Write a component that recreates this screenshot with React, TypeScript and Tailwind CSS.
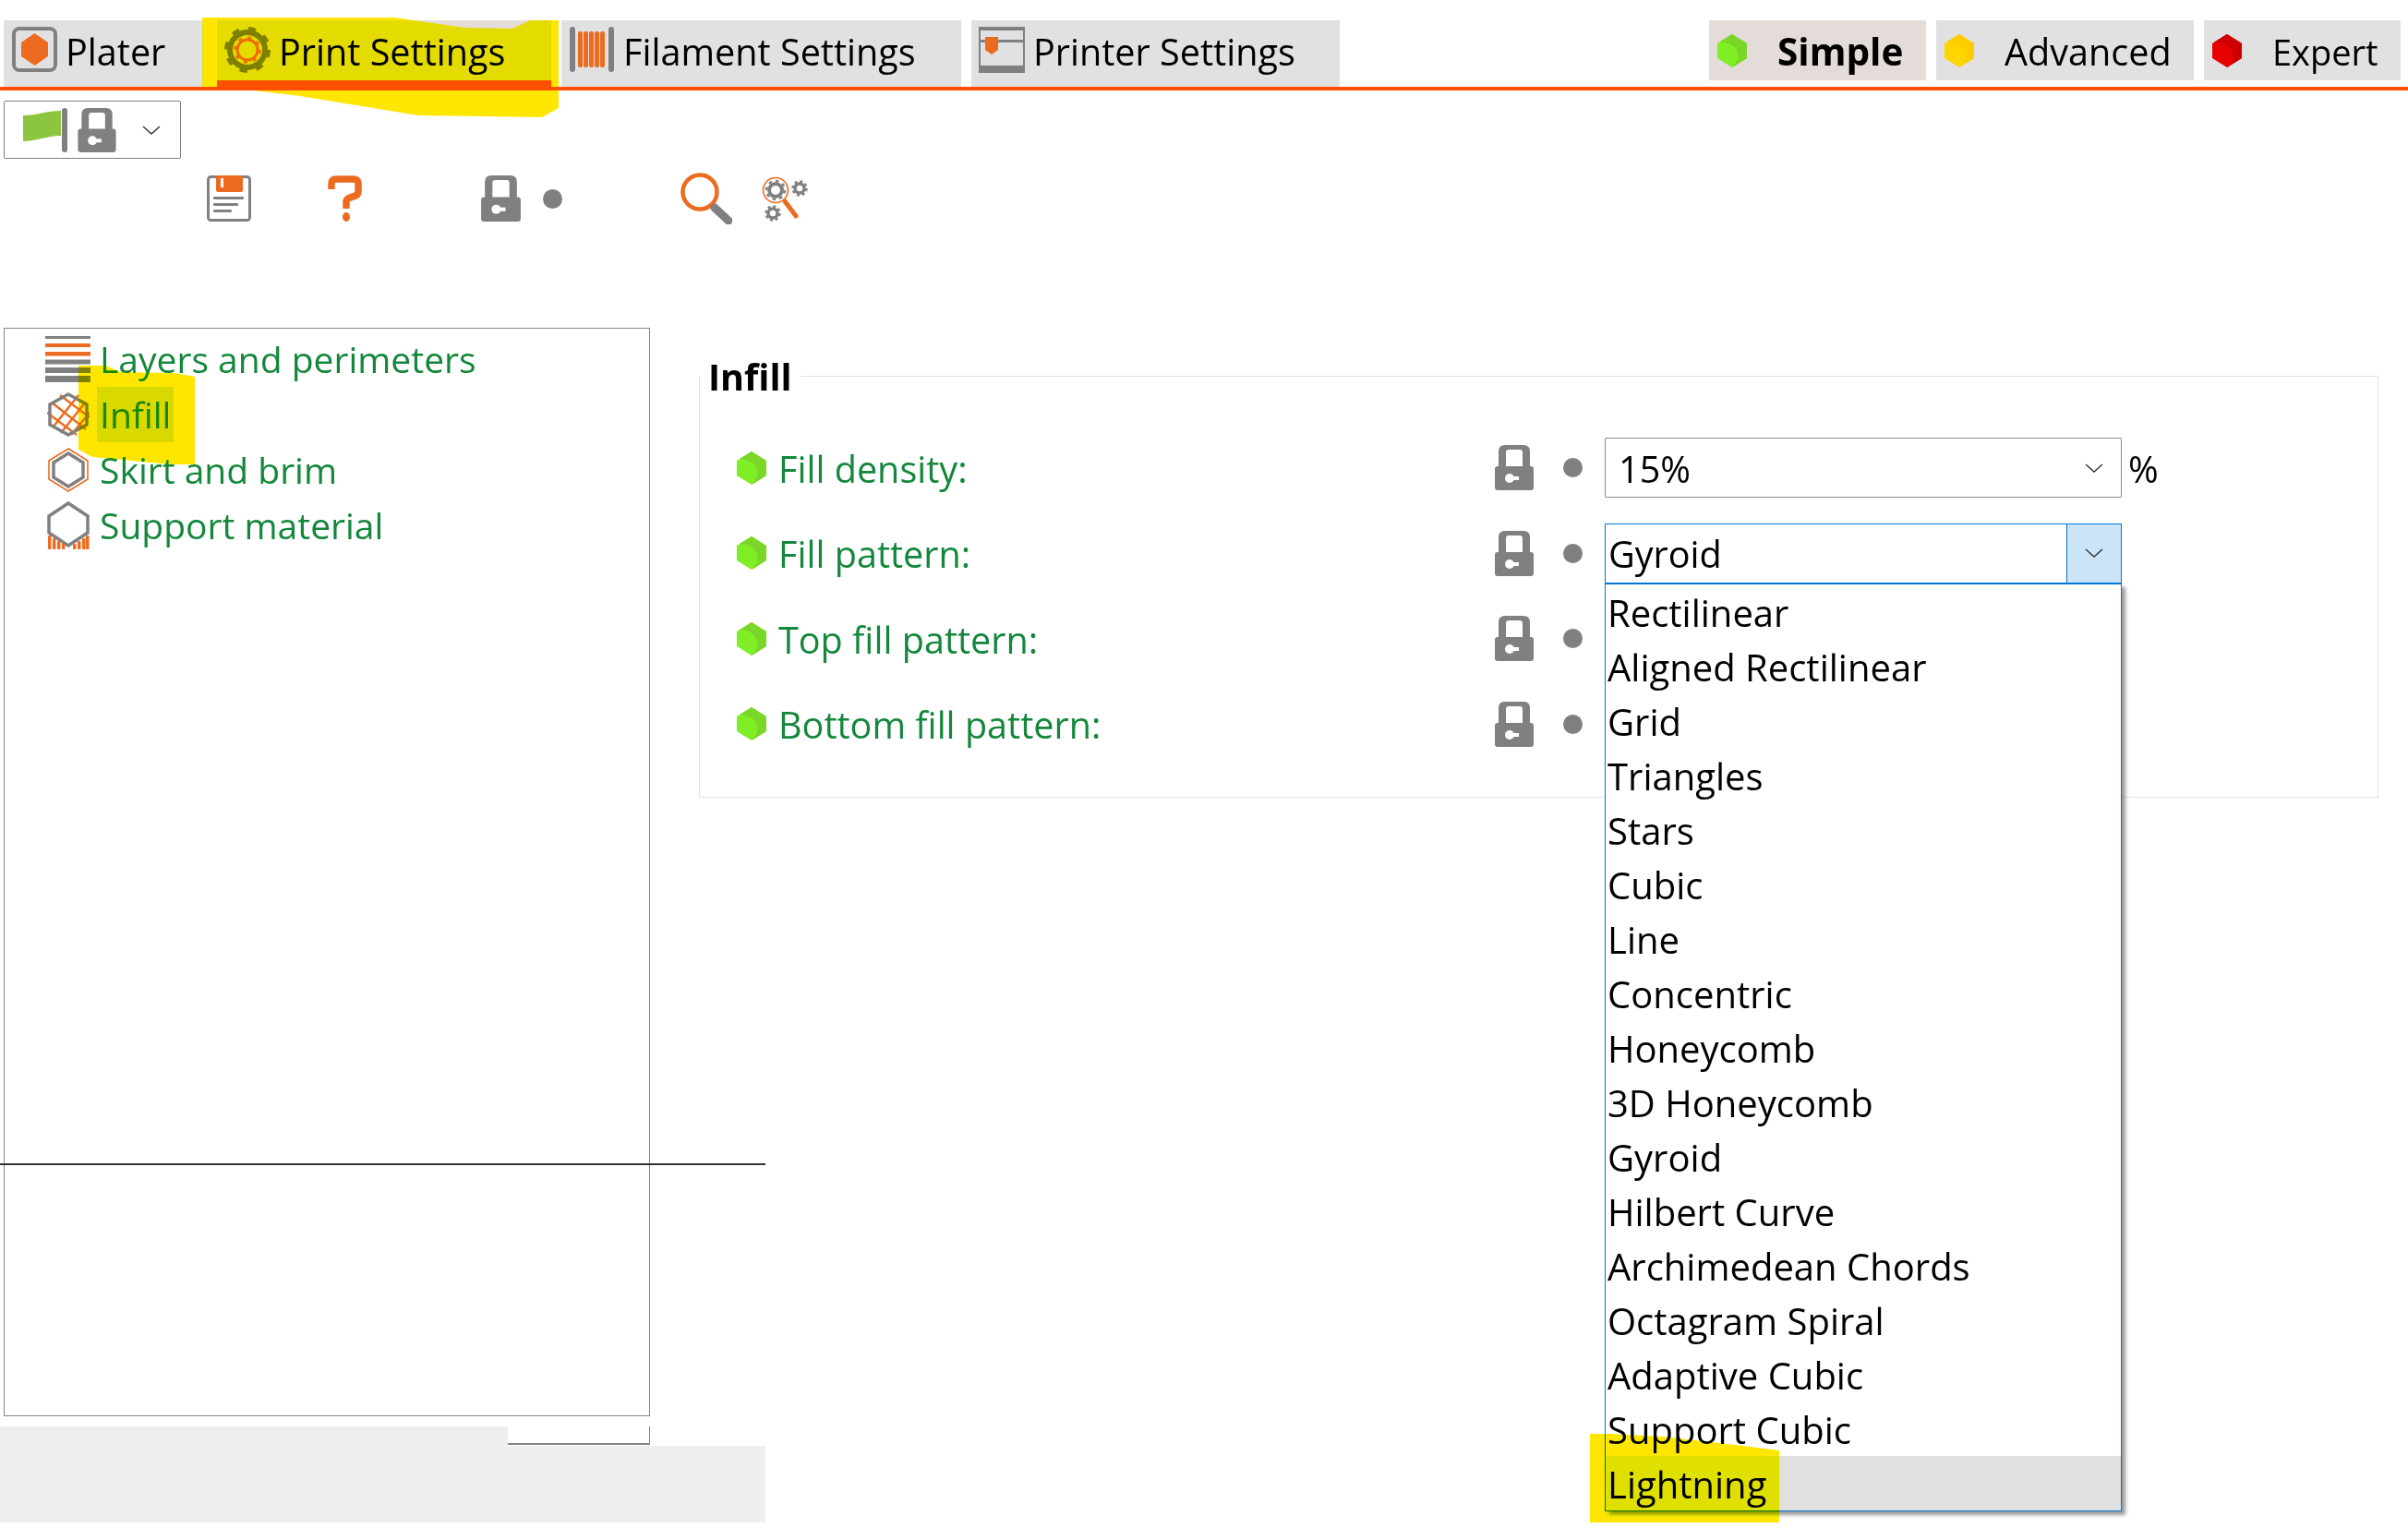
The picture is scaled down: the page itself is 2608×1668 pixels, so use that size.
import { ReactNode } from "react";

const GREY = "#808080";
const ORANGE = "#ed6b21";
const FONT = "font-['Open_Sans',sans-serif]";

// Small drawn icons
function Hex({ color, shade, className }: { color: string; shade: string; className: string }) {
  return (
    <svg viewBox="0 0 32 36" className={className}>
      <polygon points="16,0 32,10 32,26 16,36 0,26 0,10" fill={color} />
      <path d="M16 0 L32 10 L32 26 L16 36 L22 28 C24 18 20 10 3 8 Z" fill={shade} />
    </svg>
  );
}

function Lock({ className }: { className: string }) {
  return (
    <svg viewBox="0 0 42 49" className={className}>
      <path
        fillRule="evenodd"
        d="M4 25 V7 Q4 0 11 0 H31 Q38 0 38 7 V25 H30 V8 Q30 5 27 5 H15 Q12 5 12 8 V25 Z"
        fill={GREY}
      />
      <rect x="0" y="23" width="42" height="26" rx="3" fill={GREY} />
      <circle cx="16" cy="36" r="5" fill="#fff" />
      <rect x="18" y="34" width="8" height="4" fill="#fff" />
    </svg>
  );
}

function Chevron() {
  return (
    <svg viewBox="0 0 20 10" className="h-[10px] w-[20px]">
      <path d="M1 1 L10 9 L19 1" fill="none" stroke="#333" strokeWidth="1.4" />
    </svg>
  );
}

function PlaterIcon() {
  return (
    <svg viewBox="0 0 49 49" className="h-[49px] w-[49px] shrink-0">
      <rect x="2" y="2" width="45" height="45" rx="6" fill="none" stroke={GREY} strokeWidth="4" />
      <polygon points="24.5,7 39,17 39,32 24.5,42 10,32 10,17" fill={ORANGE} />
    </svg>
  );
}

function GearIcon() {
  return (
    <svg viewBox="0 0 50 50" className="h-[50px] w-[50px] shrink-0">
      <circle cx="25" cy="25" r="19" fill="none" stroke={GREY} strokeWidth="6" />
      <circle cx="25" cy="25" r="22.5" fill="none" stroke={GREY} strokeWidth="5" strokeDasharray="8 9.7" />
      <circle cx="25" cy="25" r="11" fill="none" stroke={ORANGE} strokeWidth="3" />
      <circle cx="25" cy="25" r="13.5" fill="none" stroke={ORANGE} strokeWidth="2.5" strokeDasharray="4 6.6" />
    </svg>
  );
}

function FilamentIcon() {
  return (
    <svg viewBox="0 0 48 49" className="h-[49px] w-[48px] shrink-0">
      <rect x="0" y="0" width="6" height="49" rx="3" fill={GREY} />
      <rect x="42" y="0" width="6" height="49" rx="3" fill={GREY} />
      {[9, 15, 21, 27, 33].map((x) => (
        <rect key={x} x={x} y="5" width="5" height="39" rx="2" fill={ORANGE} />
      ))}
    </svg>
  );
}

function PrinterIcon() {
  return (
    <svg viewBox="0 0 50 50" className="h-[50px] w-[50px] shrink-0">
      <rect x="1" y="1" width="48" height="48" fill="none" stroke={GREY} strokeWidth="2" />
      <rect x="0" y="0" width="50" height="4" fill={GREY} />
      <rect x="0" y="14" width="50" height="3" fill={GREY} />
      <rect x="0" y="42" width="50" height="8" fill={GREY} />
      <path d="M7 11 H21 V25 L14 30 L7 25 Z" fill={ORANGE} />
    </svg>
  );
}

function LayersIcon() {
  return (
    <svg viewBox="0 0 49 50" className="h-[50px] w-[49px] shrink-0">
      <rect y="0" width="49" height="3" fill={GREY} />
      <rect y="8" width="49" height="4" fill={ORANGE} />
      <rect y="17" width="49" height="4.5" fill={ORANGE} />
      <rect y="25.5" width="49" height="5" fill={GREY} />
      <rect y="34" width="49" height="6" fill={GREY} />
      <rect y="43" width="49" height="7" fill={GREY} />
    </svg>
  );
}

function InfillIcon() {
  return (
    <svg viewBox="0 0 46 48" className="h-[48px] w-[46px] shrink-0">
      <g stroke={ORANGE} strokeWidth="2.5">
        <path d="M0 22 L32 46 M5 11 L42 40 M14 3 L46 27" />
        <path d="M6 38 L34 3 M15 44 L42 10 M26 46 L46 22" />
      </g>
      <polygon points="23,2 43,13 43,35 23,46 3,35 3,13" fill="none" stroke={GREY} strokeWidth="3.5" />
    </svg>
  );
}

function SkirtIcon() {
  return (
    <svg viewBox="0 0 44 48" className="h-[48px] w-[44px] shrink-0">
      <polygon points="22,1 43,14 43,34 22,47 1,34 1,14" fill="none" stroke={ORANGE} strokeWidth="1.6" />
      <polygon points="22,6 38,16 38,32 22,42 6,32 6,16" fill="none" stroke={GREY} strokeWidth="3.5" />
    </svg>
  );
}

function SupportIcon() {
  return (
    <svg viewBox="0 0 46 52" className="h-[52px] w-[46px] shrink-0">
      <polygon points="23,2 44,16 44,34 23,48 2,34 2,16" fill="none" stroke={GREY} strokeWidth="3.5" />
      {[1, 6, 11, 16].map((x, i) => (
        <rect key={x} x={x} y={37 + i * 3} width="3.5" height={15 - i * 3} rx="1" fill={ORANGE} />
      ))}
      {[28, 33, 38, 42].map((x, i) => (
        <rect key={x} x={x} y={46 - i * 3} width="3.5" height={6 + i * 3} rx="1" fill={ORANGE} />
      ))}
    </svg>
  );
}

function SaveIcon() {
  return (
    <svg viewBox="0 0 48 50" className="h-[50px] w-[48px]">
      <rect x="1.5" y="1.5" width="45" height="47" rx="3" fill="#fff" stroke={GREY} strokeWidth="3" />
      <rect x="10" y="0" width="29" height="18" rx="2" fill={ORANGE} />
      <rect x="15" y="3" width="3" height="10" fill="#fff" />
      <rect x="7" y="23" width="33" height="3" rx="1" fill={GREY} />
      <rect x="7" y="30" width="27" height="3" rx="1" fill={GREY} />
      <rect x="7" y="37" width="20" height="3" rx="1" fill={GREY} />
    </svg>
  );
}

function HelpIcon() {
  return (
    <svg viewBox="0 0 37 50" className="h-[50px] w-[37px]">
      <path d="M4 15 V9 Q4 4 9 4 H27 Q33 4 33 9 V17 Q33 22 27 23 L22 25 Q20 26 20 29 V36" fill="none" stroke={ORANGE} strokeWidth="7.5" />
      <ellipse cx="20" cy="45" rx="4" ry="5" fill={ORANGE} />
    </svg>
  );
}

function SearchIcon() {
  return (
    <svg viewBox="0 0 57 56" className="h-[56px] w-[57px]">
      <circle cx="22" cy="21" r="18.5" fill="none" stroke={ORANGE} strokeWidth="4.5" />
      <path d="M35 36 L40 35" stroke={GREY} strokeWidth="3" />
      <path d="M38 38 L53 52" stroke={GREY} strokeWidth="9" strokeLinecap="round" />
    </svg>
  );
}

function ConfigIcon() {
  return (
    <svg viewBox="0 0 50 50" className="h-[50px] w-[50px]">
      <circle cx="15" cy="16" r="13.5" fill="none" stroke={ORANGE} strokeWidth="1.6" />
      <circle cx="15" cy="16" r="7" fill="none" stroke={GREY} strokeWidth="4" />
      <circle cx="15" cy="16" r="10" fill="none" stroke={GREY} strokeWidth="2.5" strokeDasharray="3.5 4.3" />
      <circle cx="41" cy="14" r="5" fill="none" stroke={GREY} strokeWidth="3.5" />
      <circle cx="41" cy="14" r="7.5" fill="none" stroke={GREY} strokeWidth="2.5" strokeDasharray="3 2.9" />
      <circle cx="12" cy="41" r="5" fill="none" stroke={GREY} strokeWidth="3.5" />
      <circle cx="12" cy="41" r="7.5" fill="none" stroke={GREY} strokeWidth="2.5" strokeDasharray="3 2.9" />
      <path d="M25 28 L37 44" stroke={ORANGE} strokeWidth="5" strokeLinecap="round" />
    </svg>
  );
}

function Tab({ icon, label, width, active, gap }: { icon: ReactNode; label: string; width: string; active?: boolean; gap: string }) {
  return (
    <div
      className={`flex h-[72px] items-start pt-[7px] ${width} ${gap} ${
        active ? "border-b-[7px] border-[#ff5000] bg-[#e4dcd9]" : "bg-[#e1e1e1]"
      }`}
    >
      {icon}
      <span className="pt-[2px] text-[39.6px] leading-[50px] text-black">{label}</span>
    </div>
  );
}

function ModeButton({ hex, label, width, text, gap, active }: { hex: ReactNode; label: string; width: string; text: string; gap: string; active?: boolean }) {
  return (
    <div className={`flex h-[65px] items-center pl-[9px] ${width} ${gap} ${active ? "bg-[#e4dcd9]" : "bg-[#e1e1e1]"}`}>
      {hex}
      <span className={`pt-[2px] leading-[50px] text-black ${text}`}>{label}</span>
    </div>
  );
}

const treeItems = [
  { label: "Layers and perimeters", icon: <LayersIcon /> },
  { label: "Infill", icon: <InfillIcon />, selected: true },
  { label: "Skirt and brim", icon: <SkirtIcon /> },
  { label: "Support material", icon: <SupportIcon /> },
];

const patterns = [
  "Rectilinear",
  "Aligned Rectilinear",
  "Grid",
  "Triangles",
  "Stars",
  "Cubic",
  "Line",
  "Concentric",
  "Honeycomb",
  "3D Honeycomb",
  "Gyroid",
  "Hilbert Curve",
  "Archimedean Chords",
  "Octagram Spiral",
  "Adaptive Cubic",
  "Support Cubic",
  "Lightning",
];

function OptionRow({ label, children }: { label: string; children?: ReactNode }) {
  return (
    <div className="flex h-[65px] items-center">
      <Hex color="#7fee25" shade="#7ad628" className="ml-[40px] h-[36px] w-[32px] shrink-0" />
      <span className="ml-[13px] w-[776px] pt-[2px] text-[39.6px] leading-[50px] text-[#14873c]">{label}</span>
      <Lock className="h-[49px] w-[42px] shrink-0" />
      <div className="ml-[32px] h-[21px] w-[21px] shrink-0 rounded-full bg-[#808080]" />
      <div className="relative ml-[24px] flex flex-1 items-center">{children}</div>
    </div>
  );
}

export default function App() {
  return (
    <div className={`relative h-[1668px] w-[2608px] overflow-hidden bg-white ${FONT}`}>
      {/* tabs */}
      <div className="flex border-b-[4px] border-[#ff5000] pt-[22px]">
        <Tab icon={<PlaterIcon />} label="Plater" width="w-[216px]" gap="ml-[4px] gap-[9px] pl-[9px]" />
        <Tab icon={<GearIcon />} label="Print Settings" width="w-[362px]" gap="ml-[15px] gap-[9px] pl-[8px]" active />
        <Tab icon={<FilamentIcon />} label="Filament Settings" width="w-[433px]" gap="ml-[11px] gap-[10px] pl-[9px]" />
        <Tab icon={<PrinterIcon />} label="Printer Settings" width="w-[399px]" gap="ml-[11px] gap-[9px] pl-[8px]" />
        <div className="ml-auto flex gap-[11px] pr-[8px]">
          <ModeButton
            hex={<Hex color="#7fee25" shade="#7ad628" className="h-[36px] w-[32px]" />}
            label="Simple"
            width="w-[235px]"
            gap="gap-[33px]"
            text="text-[40.5px] font-bold"
            active
          />
          <ModeButton
            hex={<Hex color="#ffd500" shade="#ffcc00" className="h-[36px] w-[32px]" />}
            label="Advanced"
            width="w-[279px]"
            gap="gap-[33px]"
            text="text-[39.6px]"
          />
          <ModeButton
            hex={<Hex color="#e60000" shade="#cc0000" className="h-[36px] w-[32px]" />}
            label="Expert"
            width="w-[213px]"
            gap="gap-[33px]"
            text="text-[38px]"
          />
        </div>
      </div>

      {/* preset selector */}
      <div className="ml-[4px] mt-[11px] flex h-[63px] w-[192px] items-center rounded-[2px] border border-[#808080]">
        <svg viewBox="0 0 49 48" className="ml-[20px] h-[48px] w-[49px]">
          <path d="M0 8 C15 8 25 3 41 3 V30 C25 30 15 36 0 36 Z" fill="#8cc63f" />
          <rect x="42" y="0" width="6" height="48" rx="3" fill={GREY} />
        </svg>
        <Lock className="ml-[10px] h-[48px] w-[42px]" />
        <div className="ml-[28px]">
          <Chevron />
        </div>
      </div>

      {/* toolbar */}
      <div className="ml-[224px] mt-[15px] flex h-[56px] items-center">
        <SaveIcon />
        <div className="ml-[83px]">
          <HelpIcon />
        </div>
        <Lock className="ml-[129px] h-[50px] w-[43px]" />
        <div className="ml-[24px] h-[21px] w-[21px] rounded-full bg-[#808080]" />
        <div className="ml-[127px]">
          <SearchIcon />
        </div>
        <div className="ml-[32px]">
          <ConfigIcon />
        </div>
      </div>

      {/* main */}
      <div className="relative mt-[112px] flex">
        <div className="ml-[4px] w-[700px] shrink-0">
          <div className="h-[1179px] border border-[#85858a] pt-[3px]">
            {treeItems.map((item) => (
              <div key={item.label} className="flex h-[60px] items-center">
                <div className="w-[103px] pl-[44px]">
                  <div className="flex w-[49px] justify-center">{item.icon}</div>
                </div>
                <span
                  className={`text-[39px] leading-[60px] text-[#14873c] ${
                    item.selected ? "-ml-[3px] bg-[#d9d9d9] px-[3px]" : ""
                  }`}
                >
                  {item.label}
                </span>
              </div>
            ))}
          </div>
          {/* bottom buttons strip */}
          <div className="-ml-[4px] mt-[11px] w-[829px]">
            <div className="flex h-[21px]">
              <div className="w-[550px] bg-[#efefef]" />
              <div className="h-[20px] w-[154px] border-b-2 border-r border-[#85858a]" />
            </div>
            <div className="h-[83px] bg-[#efefef]" />
          </div>
        </div>

        {/* options */}
        <fieldset className="ml-[53px] mt-[34px] h-[475px] w-[1819px] self-start border border-[#e3e3e3]">
          <legend className="px-[9px] pt-[3px] text-[39.6px] font-bold leading-[33px] text-black">Infill</legend>
          <div className="flex flex-col gap-[27.5px] pt-[49px]">
            <OptionRow label="Fill density:">
              <div className="flex h-[65px] w-[560px] items-center rounded-[1px] border border-[#8c8c8c] pl-[14px] pr-[19px]">
                <span className="flex-1 pt-[2px] text-[39.6px] leading-[50px] text-black">15%</span>
                <Chevron />
              </div>
              <span className="ml-[7px] pt-[2px] text-[39.6px] leading-[50px] text-black">%</span>
            </OptionRow>
            <OptionRow label="Fill pattern:">
              <div className="flex h-[65px] w-[560px] items-center border border-[#0078d7]">
                <span className="flex-1 pl-[3px] pt-[2px] text-[39.6px] leading-[50px] text-black">Gyroid</span>
                <div className="flex h-full w-[59px] items-center justify-center border-l border-[#0078d7] bg-[#cce4f7]">
                  <Chevron />
                </div>
              </div>
              {/* open dropdown list */}
              <div className="absolute left-0 top-[65px] z-10 w-[560px] border border-[#0078d7] bg-white shadow-[4px_4px_4px_rgba(0,0,0,0.4)]">
                {patterns.map((p) => (
                  <div
                    key={p}
                    className={`h-[59px] pl-[2px] pt-[2px] text-[40px] leading-[57px] text-black ${
                      p === "Lightning" ? "bg-[#e0e0e0]" : ""
                    }`}
                  >
                    {p}
                  </div>
                ))}
              </div>
            </OptionRow>
            <OptionRow label="Top fill pattern:" />
            <OptionRow label="Bottom fill pattern:" />
          </div>
        </fieldset>

        {/* sash line */}
        <div className="absolute left-0 top-[905px] h-[2px] w-[829px] bg-[#333333]" />
      </div>

      {/* yellow highlighter marks */}
      <svg viewBox="0 0 2608 1668" className="pointer-events-none absolute left-0 top-0 z-20 h-[1668px] w-[2608px] mix-blend-darken">
        <g fill="#ffe600">
          <path d="M219 19 H427 L504 30 L555 31 L574 22 H605 V117 L587 127 L453 125 L325 104 L274 98 H219 Z" />
          <path d="M85 396 H115 L130 403 L190 404 L211 408 V503 H185 L100 495 L85 487 Z" />
          <path d="M1722 1553 H1745 L1800 1556 L1880 1565 L1927 1571 V1649 H1722 Z" />
        </g>
      </svg>
    </div>
  );
}
